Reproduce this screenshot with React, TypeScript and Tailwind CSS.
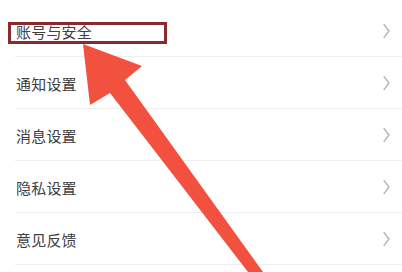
import React from "react";

const items = ["账号与安全", "通知设置", "消息设置", "隐私设置", "意见反馈"];

function Chevron() {
  return (
    <svg width="7" height="16" viewBox="0 0 7 16" fill="none" className="shrink-0">
      <path d="M1 1.5 L6 8 L1 14.5" stroke="#b3b3b3" strokeWidth="1.3" strokeLinecap="round" strokeLinejoin="round" />
    </svg>
  );
}

export default function App() {
  return (
    <div
      className="relative w-[402px] h-[272px] overflow-hidden bg-white"
      style={{ fontFamily: '"Noto Sans CJK SC", "Noto Sans", sans-serif' }}
    >
      <div className="pt-[5px]">
        {items.map((t) => (
          <div key={t} className="ml-[15px] h-[52px] flex items-center justify-between border-b border-[#eeeeee] pl-px pr-[12px]">
            <span className="text-[15px] leading-none text-[#404040] tracking-[0.2px] pt-px">{t}</span>
            <Chevron />
          </div>
        ))}
      </div>
      <div className="absolute left-[8px] top-[22px] w-[159px] h-[22px] border-[3px] border-[#8b2a2e]" />
      <svg className="absolute left-0 top-0" width="402" height="272" viewBox="0 0 402 272">
        <polygon
          points="83,44 142,66 125,80 263,272 248,272 110,93 90,105"
          fill="#f2513f"
        />
      </svg>
    </div>
  );
}
